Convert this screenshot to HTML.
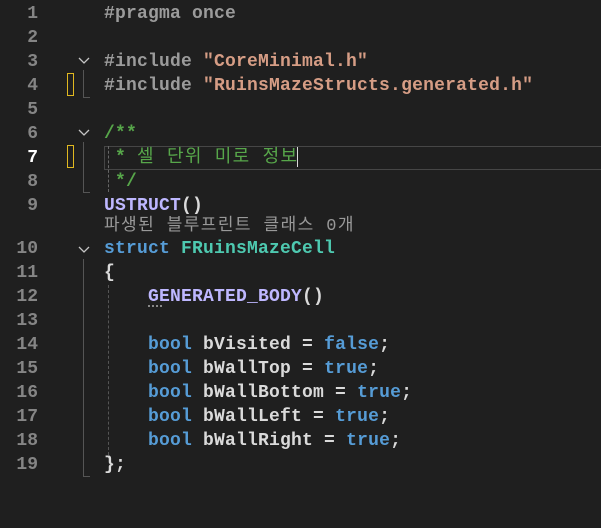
<!DOCTYPE html>
<html><head><meta charset="utf-8"><style>
html,body{margin:0;padding:0;background:#1f1f1f;width:601px;height:526px;overflow:hidden}
.w{position:absolute;left:0;top:2px;width:601px;height:526px}
.l{position:absolute;left:104px;height:24px;line-height:24px;font-family:"Liberation Mono","Noto Sans CJK KR",monospace;font-size:18px;font-weight:bold;letter-spacing:0.2px;color:#dadada;white-space:pre}
.n{position:absolute;width:38px;text-align:right;left:0;height:24px;line-height:24px;font-family:"Liberation Mono",monospace;font-size:18px;font-weight:bold;color:#858585}
.pp{color:#9b9b9b}.s{color:#d69d85}.c{color:#57a64a}.m{color:#beb7ff}.k{color:#569cd6}.t{color:#4ec9b0}.g{color:#999}
.ko{letter-spacing:1.3px;font-weight:normal}
.y{position:absolute;left:67px;width:5px;height:21px;border:1px solid #e0b820}
.chev{position:absolute;left:78px;width:12px;height:8px}
.vg{position:absolute;border-left:1px solid #555}
</style></head><body><div class="w">
<div style="position:absolute;left:104px;top:144px;width:500px;height:22px;border:1px solid #464646"></div>
<div style="position:absolute;left:297px;top:145px;width:1px;height:20px;background:#dadada"></div>

<div class="n" style="top:0">1</div><div class="l pp" style="top:0">#pragma once</div>
<div class="n" style="top:24px">2</div>
<div class="n" style="top:48px">3</div><div class="l" style="top:48px"><span class="pp">#include </span><span class="s">"CoreMinimal.h"</span></div>
<div class="n" style="top:72px">4</div><div class="l" style="top:72px"><span class="pp">#include </span><span class="s">"RuinsMazeStructs.generated.h"</span></div>
<div class="n" style="top:96px">5</div>
<div class="n" style="top:120px">6</div><div class="l c" style="top:120px">/**</div>
<div class="n" style="top:144px;color:#fff">7</div><div class="l c" style="top:144px"> * <span class="ko">셀 단위 미로 정보</span></div>
<div class="n" style="top:168px">8</div><div class="l c" style="top:168px"> */</div>
<div class="n" style="top:192px">9</div><div class="l" style="top:192px"><span class="m">USTRUCT</span>()</div>
<div class="l g" style="top:213px;font-size:17px;font-weight:normal;letter-spacing:1.4px">파생된 블루프린트 클래스 0개</div>
<div class="n" style="top:235px">10</div><div class="l" style="top:235px"><span class="k">struct</span> <span class="t">FRuinsMazeCell</span></div>
<div class="n" style="top:259px">11</div><div class="l" style="top:259px">{</div>
<div class="n" style="top:283px">12</div><div class="l" style="top:283px">    <span class="m">GENERATED_BODY</span>()</div>
<div class="n" style="top:307px">13</div>
<div class="n" style="top:331px">14</div><div class="l" style="top:331px">    <span class="k">bool</span> bVisited = <span class="k">false</span>;</div>
<div class="n" style="top:355px">15</div><div class="l" style="top:355px">    <span class="k">bool</span> bWallTop = <span class="k">true</span>;</div>
<div class="n" style="top:379px">16</div><div class="l" style="top:379px">    <span class="k">bool</span> bWallBottom = <span class="k">true</span>;</div>
<div class="n" style="top:403px">17</div><div class="l" style="top:403px">    <span class="k">bool</span> bWallLeft = <span class="k">true</span>;</div>
<div class="n" style="top:427px">18</div><div class="l" style="top:427px">    <span class="k">bool</span> bWallRight = <span class="k">true</span>;</div>
<div class="n" style="top:451px">19</div><div class="l" style="top:451px">};</div>

<div class="y" style="top:71px"></div>
<div class="y" style="top:143px"></div>
<svg class="chev" style="top:55px" viewBox="0 0 12 8"><path d="M1 1L6 6L11 1" stroke="#c5c5c5" fill="none" stroke-width="1.3"/></svg>
<svg class="chev" style="top:127px" viewBox="0 0 12 8"><path d="M1 1L6 6L11 1" stroke="#c5c5c5" fill="none" stroke-width="1.3"/></svg>
<svg class="chev" style="top:244px" viewBox="0 0 12 8"><path d="M1 1L6 6L11 1" stroke="#c5c5c5" fill="none" stroke-width="1.3"/></svg>
<div class="vg" style="left:83px;top:68px;height:27px;border-bottom:1px solid #555;width:6px"></div>
<div class="vg" style="left:83px;top:140px;height:50px;border-bottom:1px solid #555;width:6px"></div>
<div class="vg" style="left:83px;top:257px;height:217px;border-bottom:1px solid #555;width:6px"></div>
<div style="position:absolute;left:108px;top:144px;height:46px;border-left:1px dashed #666"></div>
<div style="position:absolute;left:108px;top:283px;height:170px;border-left:1px dashed #555"></div>
<div style="position:absolute;left:148px;top:303px;width:14px;height:2px;border-top:2px dotted #888"></div>
</div></body></html>
